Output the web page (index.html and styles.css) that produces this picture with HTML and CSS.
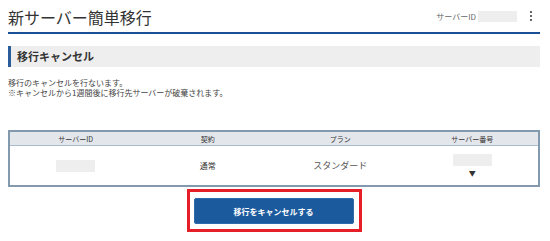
FILE: index.html
```html
<!DOCTYPE html>
<html lang="ja">
<head>
  <meta charset="UTF-8">
  <meta name="viewport" content="width=device-width, initial-scale=1.0">
  <title>新サーバー簡単移行</title>
  <link rel="stylesheet" href="styles.css">
</head>
<body>
  <div class="page">
    <div class="header">
      <h1>新サーバー簡単移行</h1>
      <div class="header-right">
        <span class="server-label">サーバーID</span>
        <span class="blank blank-id"></span>
        <span class="kebab"><i></i><i></i><i></i></span>
      </div>
    </div>

    <!-- 移行キャンセル -->
    <h2 class="section-title">移行キャンセル</h2>
    <p class="note">移行のキャンセルを行ないます。<br>※キャンセルから1週間後に移行先サーバーが破棄されます。</p>

    <table class="server-table">
      <thead>
        <tr>
          <th>サーバーID</th>
          <th>契約</th>
          <th>プラン</th>
          <th>サーバー番号</th>
        </tr>
      </thead>
      <tbody>
        <tr>
          <td><span class="blank blank-cell"></span></td>
          <td>通常</td>
          <td class="plan">スタンダード</td>
          <td>
            <span class="blank blank-cell"></span>
            <span class="arrow">▼</span>
          </td>
        </tr>
      </tbody>
    </table>

    <div class="actions">
      <div class="highlight">
        <button class="cancel-button">移行をキャンセルする</button>
      </div>
    </div>
  </div>
</body>
</html>
```

FILE: styles.css
```css
body {
  margin: 0;
  background-color: #fff;
  font-family: "Noto Sans CJK JP", "Noto Sans", sans-serif;
  color: #333;
}
.page {
  padding: 0 10px 0 8px;
}
.header {
  display: flex;
  justify-content: space-between;
  align-items: center;
  height: 32px;
  border-bottom: 2px solid #1b4f95;
}
.header h1 {
  margin: 0;
  font-size: 16px;
  font-weight: normal;
  color: #333;
  line-height: 1;
  padding-top: 1px;
}
.header-right {
  display: flex;
  align-items: center;
  padding-right: 8px;
}
.server-label {
  font-size: 8px;
  color: #666;
  margin-right: 2px;
}
.blank {
  display: inline-block;
  background-color: #eeeeee;
}
.blank-id {
  width: 39px;
  height: 11px;
}
.kebab {
  display: flex;
  flex-direction: column;
  gap: 2px;
  margin-left: 13px;
}
.kebab i {
  display: block;
  width: 2px;
  height: 2px;
  border-radius: 50%;
  background-color: #333;
}
.section-title {
  margin: 12px 0 0;
  height: 21px;
  line-height: 21px;
  background-color: #eeeeee;
  border-left: 3px solid #2b5c9c;
  padding-left: 6px;
  font-size: 11px;
  font-weight: bold;
  color: #333;
}
.note {
  margin: 11px 0 0;
  font-size: 8px;
  line-height: 10px;
  color: #444;
}
.server-table {
  width: 100%;
  margin-top: 32px;
  border-collapse: collapse;
  border: 2px solid #8399ad;
  table-layout: fixed;
}
.server-table th {
  height: 13px;
  padding: 0;
  background-color: #e3e7ec;
  border-bottom: 1px solid #a8bccd;
  font-size: 7px;
  font-weight: normal;
  color: #333;
}
.server-table td {
  height: 39px;
  padding: 0;
  text-align: center;
  font-size: 8px;
  color: #333;
}
.server-table td.plan {
  font-size: 9px;
  color: #555;
}
.blank-cell {
  width: 39px;
  height: 12px;
  vertical-align: middle;
}
.server-table td .blank-cell + .arrow {
  display: block;
  margin-top: 3px;
  font-size: 7px;
  line-height: 8px;
}
.actions {
  display: flex;
  justify-content: center;
  margin-top: 2px;
}
.highlight {
  border: 3px solid #e61e27;
  padding: 6px 5px 5px 4px;
}
.cancel-button {
  display: block;
  width: 160px;
  height: 26px;
  background-color: #1c5a9e;
  border: 1px solid #2f6aab;
  border-radius: 2px;
  color: #fff;
  font-family: inherit;
  font-size: 8px;
  font-weight: bold;
  cursor: pointer;
}
```
